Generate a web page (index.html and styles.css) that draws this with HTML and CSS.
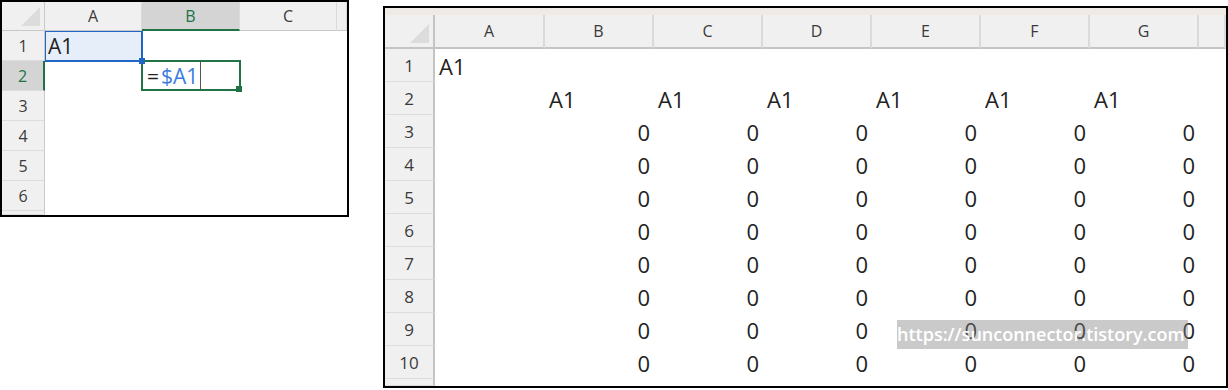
FILE: index.html
```html
<!DOCTYPE html>
<html lang="en">
<head>
    <meta charset="UTF-8">
    <title>Mixed reference</title>
    <link rel="stylesheet" href="styles.css">
</head>
<body>

    <!-- ===== SMALL SHEET: editing B2 ===== -->
    <div class="sheet sheet-small">
        <div class="hd corner"></div>
        <div class="hd col">A</div>
        <div class="hd col active-col">B</div>
        <div class="hd col">C</div>
        <div class="hd col"></div>

        <div class="hd row">1</div>
        <div class="cell ref-cell">A1</div>
        <div class="cell"></div>
        <div class="cell"></div>
        <div class="cell"></div>

        <div class="hd row active-row">2</div>
        <div class="cell"></div>
        <div class="cell edit-cell"><span class="op">=</span><span class="ref">$A1</span><span class="caret"></span></div>
        <div class="cell"></div>
        <div class="cell"></div>

        <div class="hd row">3</div>
        <div class="cell"></div><div class="cell"></div><div class="cell"></div><div class="cell"></div>
        <div class="hd row">4</div>
        <div class="cell"></div><div class="cell"></div><div class="cell"></div><div class="cell"></div>
        <div class="hd row">5</div>
        <div class="cell"></div><div class="cell"></div><div class="cell"></div><div class="cell"></div>
        <div class="hd row">6</div>
        <div class="cell"></div><div class="cell"></div><div class="cell"></div><div class="cell"></div>
        <div class="hd row"></div>
        <div class="cell"></div><div class="cell"></div><div class="cell"></div><div class="cell"></div>
    </div>

    <!-- ===== BIG SHEET: filled result ===== -->
    <div class="sheet sheet-big">
        <div class="band"></div>

        <div class="hd corner"></div>
        <div class="hd col">A</div>
        <div class="hd col">B</div>
        <div class="hd col">C</div>
        <div class="hd col">D</div>
        <div class="hd col">E</div>
        <div class="hd col">F</div>
        <div class="hd col">G</div>
        <div class="hd col"></div>

        <div class="hd row">1</div>
        <div class="cell txt">A1</div>
        <div class="cell"></div><div class="cell"></div><div class="cell"></div><div class="cell"></div><div class="cell"></div><div class="cell"></div><div class="cell"></div>

        <div class="hd row">2</div>
        <div class="cell"></div>
        <div class="cell txt">A1</div><div class="cell txt">A1</div><div class="cell txt">A1</div><div class="cell txt">A1</div><div class="cell txt">A1</div><div class="cell txt">A1</div>
        <div class="cell"></div>

        <div class="hd row">3</div>
        <div class="cell"></div>
        <div class="cell num">0</div><div class="cell num">0</div><div class="cell num">0</div><div class="cell num">0</div><div class="cell num">0</div><div class="cell num">0</div>
        <div class="cell"></div>

        <div class="hd row">4</div>
        <div class="cell"></div>
        <div class="cell num">0</div><div class="cell num">0</div><div class="cell num">0</div><div class="cell num">0</div><div class="cell num">0</div><div class="cell num">0</div>
        <div class="cell"></div>

        <div class="hd row">5</div>
        <div class="cell"></div>
        <div class="cell num">0</div><div class="cell num">0</div><div class="cell num">0</div><div class="cell num">0</div><div class="cell num">0</div><div class="cell num">0</div>
        <div class="cell"></div>

        <div class="hd row">6</div>
        <div class="cell"></div>
        <div class="cell num">0</div><div class="cell num">0</div><div class="cell num">0</div><div class="cell num">0</div><div class="cell num">0</div><div class="cell num">0</div>
        <div class="cell"></div>

        <div class="hd row">7</div>
        <div class="cell"></div>
        <div class="cell num">0</div><div class="cell num">0</div><div class="cell num">0</div><div class="cell num">0</div><div class="cell num">0</div><div class="cell num">0</div>
        <div class="cell"></div>

        <div class="hd row">8</div>
        <div class="cell"></div>
        <div class="cell num">0</div><div class="cell num">0</div><div class="cell num">0</div><div class="cell num">0</div><div class="cell num">0</div><div class="cell num">0</div>
        <div class="cell"></div>

        <div class="hd row">9</div>
        <div class="cell"></div>
        <div class="cell num">0</div><div class="cell num">0</div><div class="cell num">0</div><div class="cell num">0</div><div class="cell num">0</div><div class="cell num">0</div>
        <div class="cell"></div>

        <div class="hd row">10</div>
        <div class="cell"></div>
        <div class="cell num">0</div><div class="cell num">0</div><div class="cell num">0</div><div class="cell num">0</div><div class="cell num">0</div><div class="cell num">0</div>
        <div class="cell"></div>

        <div class="hd row"></div>
        <div class="cell"></div><div class="cell"></div><div class="cell"></div><div class="cell"></div><div class="cell"></div><div class="cell"></div><div class="cell"></div><div class="cell"></div>

        <div class="watermark">https://sunconnector.tistory.com</div>
    </div>

</body>
</html>
```

FILE: styles.css
```css
* { box-sizing: border-box; margin: 0; padding: 0; }
html, body { width: 100%; height: 100%; background: #fff; }
body {
    display: flex; align-items: flex-start; gap: 34px;
    font-family: "Open Sans", "Noto Sans", Arial, sans-serif;
    color: #222;
}

/* --- shared sheet bits --- */
.sheet {
    display: grid; border: 2px solid #000; background: #fff;
    overflow: hidden; position: relative;
}
.hd {
    background: #f0f0f0; color: #3a3a3a;
    display: flex; align-items: center; justify-content: center;
    font-size: 16px;
}
.hd.col { border-right: 1px solid #dadada; border-bottom: 1px solid #c8c8c8; }
.hd.row { border-bottom: 1px solid #dcdcdc; border-right: 1px solid #c8c8c8; }
.hd.corner { position: relative; border-right: 1px solid #c8c8c8; border-bottom: 1px solid #c8c8c8; }
.hd.corner::after {
    content: ""; position: absolute; right: 4px; bottom: 4px;
    width: 19px; height: 19px; background: #dcdcdc;
    clip-path: polygon(100% 0, 100% 100%, 0 100%);
}
.cell {
    display: flex; align-items: center;
    font-size: 21px; white-space: nowrap; padding: 0 4px;
    position: relative;
}

/* --- small sheet --- */
.sheet-small {
    width: 349px; height: 217px;
    grid-template-columns: 43px 97px 98px 97px 1fr;
    grid-template-rows: 29px repeat(6, 30px) 1fr;
}
.sheet-small .hd.active-col {
    background: #d4d4d4; color: #217346;
    border-bottom: 2px solid #217346;
}
.sheet-small .hd.active-row {
    background: #d4d4d4; color: #217346;
    border-right: 2px solid #217346;
}
.ref-cell { background: #e6eff9; color: #222; padding-left: 3px; }
.ref-cell::after {
    content: ""; position: absolute; inset: 0 -1px -1px 0;
    border: 2px solid #1f66c7; border-top-width: 1px; border-left-width: 1px;
}
.ref-cell::before {
    content: ""; position: absolute; right: -3px; bottom: -3px;
    width: 6px; height: 6px; background: #1f66c7; z-index: 1;
}
.edit-cell { padding-left: 5px; }
.edit-cell::after {
    content: ""; position: absolute; inset: -1px -1px 0 -1px;
    border: 2px solid #217346;
}
.edit-cell::before {
    content: ""; position: absolute; right: -3px; bottom: -2px;
    width: 6px; height: 6px; background: #217346; border: 1px solid #fff;
}
.edit-cell .op { color: #222; margin-right: 2px; }
.edit-cell .ref { color: #3b7ddd; }
.edit-cell .caret {
    display: block; width: 1px; align-self: stretch;
    background: #555; margin-left: 2px;
}

/* --- big sheet --- */
.sheet-big {
    width: 845px; height: 382px; margin-top: 6px;
    grid-template-columns: 50px 110px repeat(6, 109px) 1fr;
    grid-template-rows: 7px 34px repeat(10, 33px) 1fr;
}
.band { grid-column: 1 / -1; background: #efeae6; }
.sheet-big .hd.col { border-bottom: 2px solid #c4c4c4; border-right: 2px solid #dadada; }
.sheet-big .hd.corner { border-bottom: 2px solid #c4c4c4; border-right: 2px solid #c4c4c4; }
.sheet-big .hd.row { border-right: 2px solid #c4c4c4; border-bottom: 1px solid #dcdcdc; font-size: 17px; }
.sheet-big .cell { font-size: 22px; }
.cell.num { justify-content: flex-end; }

.watermark {
    position: absolute; left: 512px; top: 312px;
    width: 291px; height: 29px;
    background: rgba(128, 128, 128, 0.42); color: #fff;
    font-size: 18px; font-weight: 600; line-height: 29px; white-space: nowrap;
    overflow: hidden;
}
```
